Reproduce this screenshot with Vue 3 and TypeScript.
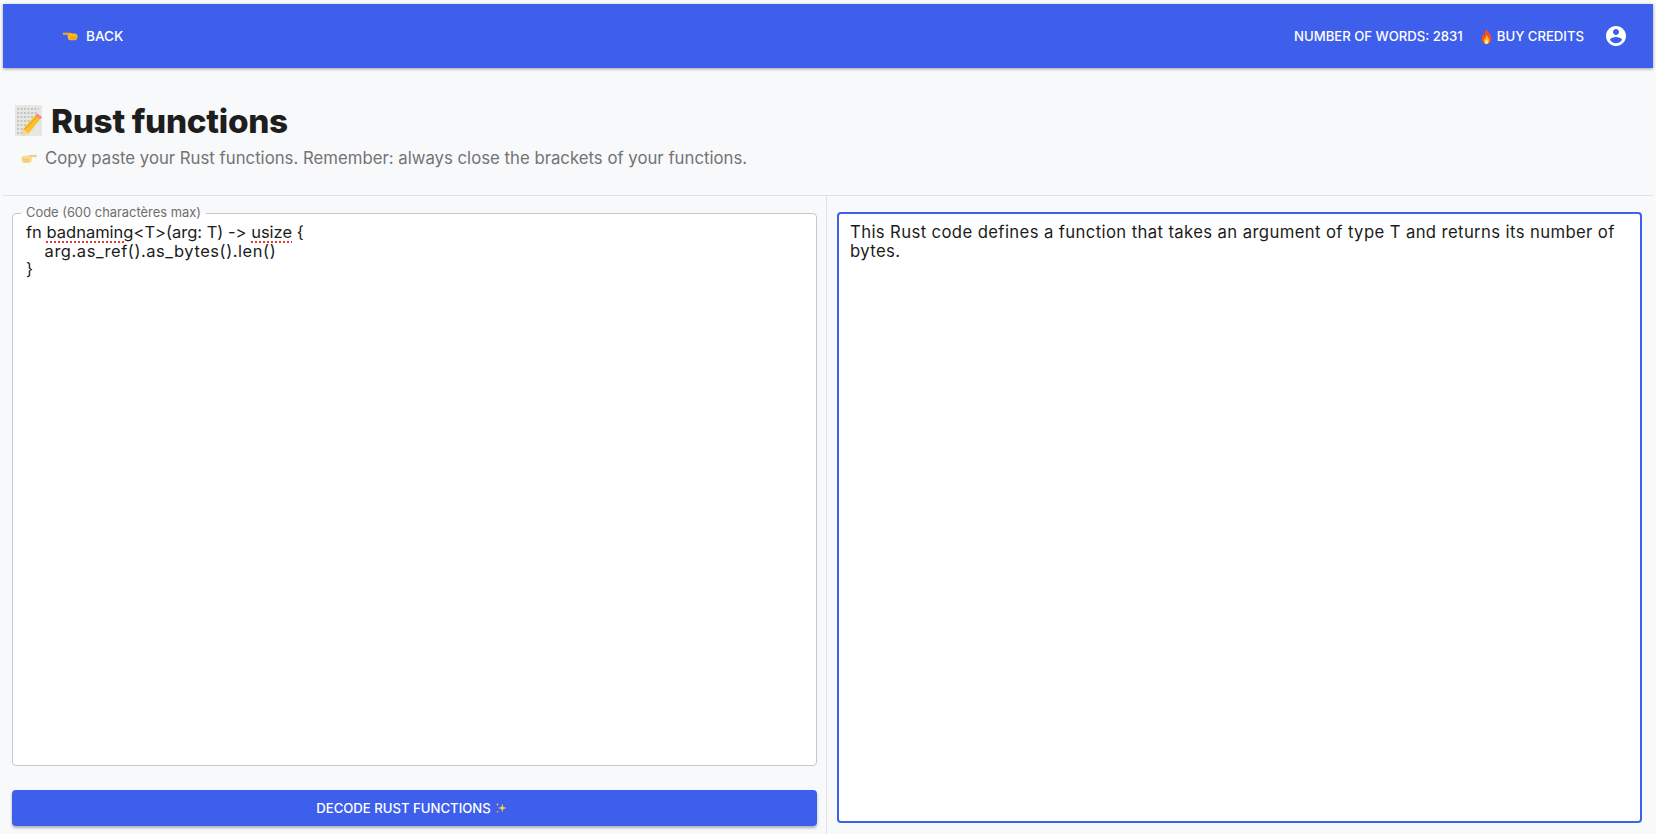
<script setup lang="ts">
const title = 'Rust functions'
const subtitle = 'Copy paste your Rust functions. Remember: always close the brackets of your functions.'
</script>

<template>
  <div class="page">
    <header class="bar">
      <button class="nav back">
        <svg class="emo hand-left" viewBox="0 0 20 12"><path d="M0 1.500h9.500c1 0 2 .3 2.800 1h3.700c2 0 3.400 1.300 3.400 4 0 3-1.600 5-3.900 5h-5.500c-1.900 0-3.100-1.100-3.500-3l-.2-4.200H0z" fill="#fdb721"/><path d="M1 2.500h8M10 7.500h8M10 9.500h7" stroke="#d98a0f" stroke-width=".8" fill="none"/></svg>
        BACK
      </button>
      <div class="right">
        <span class="nav">NUMBER OF WORDS: 2831</span>
        <button class="nav buy">
          <svg class="emo fire" viewBox="0 0 14 16" preserveAspectRatio="none"><path d="M7 0c.6 2.800 5.600 5 6.200 9.200C13.700 13 10.700 16 7 16s-6.500-2.700-6.200-6.300C1 7.600 2 6.300 3 5.400c.1 1.200.6 2 1.300 2.300C3.900 4.800 5.200 1.800 7 0z" fill="#f4511e"/><path d="M7 6.500c.5 1.700 3.600 3 3.600 5.700 0 2.200-1.600 3.800-3.600 3.800s-3.600-1.600-3.500-3.700c.1-1.300.7-2 1.400-2.600.3.700.6 1 1 1.100C5.700 9.300 6 7.800 7 6.500z" fill="#ffb52e"/><path d="M7 11c.3.900 1.800 1.500 1.800 3 0 1.100-.8 2-1.800 2s-1.800-.9-1.800-2c0-1.500 1.500-2 1.800-3z" fill="#ffeaa8"/></svg>
          BUY CREDITS
        </button>
        <svg class="account" viewBox="0 0 24 24"><path d="M12 2C6.480 2 2 6.480 2 12s4.480 10 10 10 10-4.480 10-10S17.520 2 12 2zm0 3c1.660 0 3 1.340 3 3s-1.340 3-3 3-3-1.340-3-3 1.340-3 3-3zm0 14.200c-2.500 0-4.710-1.280-6-3.220.03-1.990 4-3.080 6-3.080 1.990 0 5.970 1.090 6 3.080-1.290 1.940-3.500 3.220-6 3.220z" fill="#fff"/></svg>
      </div>
    </header>

    <section class="intro">
      <h1 class="title">
        <svg class="memo" viewBox="0 0 28 32">
          <rect width="27" height="31" y="0" fill="#e6e6e3"/>
          <g stroke="#77777a" stroke-width=".6" stroke-dasharray="2 1.500">
            <path d="M2 4h22M2 8h20M2 12h17M2 16h13M2 20h9M2 24h7M2 28h7"/>
          </g>
          <path d="M22 8.500l5 3.500L13.500 28.500 7 31l1-7z" fill="#fbc02d"/>
          <path d="M22 8.500l5 3.500-1.800 2.300-5-3.500z" fill="#f48a9b"/>
          <path d="M8 24l5.500 4.500L7 31z" fill="#f4d6a8"/>
          <path d="M9.500 24.500L23 10.800" stroke="#e59a12" stroke-width="1"/>
        </svg>
        <span>{{ title }}</span>
      </h1>
      <p class="sub">
        <svg class="emo hand-right" viewBox="0 0 20 12"><path d="M20 1.500h-9.500c-1 0-2 .3-2.800 1H4c-2 0-3.400 1.300-3.400 4 0 3 1.600 5 3.900 5H10c1.900 0 3.100-1.100 3.500-3l.2-4.200H20z" fill="#fbd98c"/><path d="M19 2.500h-8M10 7.500H2M10 9.500H3" stroke="#e5b765" stroke-width=".8" fill="none"/></svg>
        <span>{{ subtitle }}</span>
      </p>
    </section>

    <main class="columns">
      <div class="col left">
        <fieldset class="code">
          <legend>Code (600 charactères max)</legend>
          <pre class="source">fn <span class="typo">badnaming</span>&lt;T&gt;(arg: T) -&gt; <span class="typo">usize</span> {
    <span class="wide">arg.as_ref().as_bytes().len()</span>
}</pre>
        </fieldset>
        <button class="decode">
          DECODE RUST FUNCTIONS
          <svg class="emo spark" viewBox="0 0 14 14"><path d="M8.500 2l1.100 3.900L13.500 7 9.600 8.100 8.500 12 7.400 8.100 3.500 7l3.900-1.100z" fill="#fdd835"/><path d="M3 1l.5 1.500L5 3l-1.500.5L3 5l-.5-1.500L1 3l1.500-.5zM3 10l.4 1.100 1.100.4-1.100.4L3 13l-.4-1.100-1.100-.4 1.100-.4z" fill="#fbc02d"/></svg>
        </button>
      </div>
      <div class="col right-col">
        <div class="answer">This Rust code defines a function that takes an argument of type T and returns its number of bytes.</div>
      </div>
    </main>
  </div>
</template>

<style>
html, body { margin: 0; background: #f8f9fb; }
</style>

<style scoped>
.page {
  width: 1656px;
  height: 834px;
  box-sizing: border-box;
  padding: 4px 3px 0;
  overflow: hidden;
  display: flex;
  flex-direction: column;
  background: #f8f9fb;
  font-family: Inter, "Open Sans", sans-serif;
  font-feature-settings: "calt" 0;
  color: #1e1e1e;
}
.bar {
  height: 64px;
  flex: none;
  background: #3e5fec;
  box-shadow: 0 1px 3px rgba(0, 0, 0, .35);
  display: flex;
  align-items: center;
  justify-content: space-between;
  padding: 0 25px 0 60px;
  color: #fff;
}
.nav {
  display: inline-flex;
  align-items: center;
  gap: 6px;
  font: 500 13.150px Inter, sans-serif;
  color: #fff;
  background: none;
  border: 0;
  padding: 0;
  white-space: nowrap;
}
.back { font-size: 13.600px; gap: 8px; }
.right {
  display: flex;
  align-items: center;
}
.buy { margin-left: 18px; gap: 5px; }
.account { width: 24px; height: 24px; margin-left: 20px; }
.emo { flex: none; display: block; }
.hand-left { width: 15px; height: 10px; }
.fire { width: 11px; height: 15px; }
.intro {
  height: 128px;
  box-sizing: border-box;
  flex: none;
  padding: 34px 0 0 12px;
  border-bottom: 1px solid #dfe1e4;
}
.title {
  margin: 0;
  display: flex;
  align-items: center;
  gap: 8px;
  font: 800 33.300px/38px Inter, sans-serif;
  letter-spacing: -.3px;
  color: #1e1e1e;
}
.memo { width: 28px; height: 32px; flex: none; }
.sub {
  margin: 6px 0 0 6px;
  display: flex;
  align-items: center;
  gap: 8px;
  font: 400 16.750px/24px Inter, sans-serif;
  color: #737373;
}
.hand-right { width: 16px; height: 11px; }
.columns {
  flex: 1;
  min-height: 0;
  display: grid;
  grid-template-columns: 824px 1fr;
}
.col { min-width: 0; box-sizing: border-box; }
.left {
  padding: 9px 9px 7px;
  display: flex;
  flex-direction: column;
  border-right: 1px solid #dfe1e4;
  width: 824px;
}
.code {
  margin: 0;
  padding: 0 13px 0;
  height: 561px;
  flex: none;
  box-sizing: border-box;
  background: #fff;
  border: 1px solid #c4c7cc;
  border-radius: 4px;
  min-width: 0;
}
legend {
  padding: 0 5px;
  margin-left: -5px;
  font: 400 12.900px/16px Inter, sans-serif;
  color: #6e6e6e;
}
.source {
  margin: 2px 0 0;
  font: 400 16.500px/18.500px Inter, sans-serif;
  font-feature-settings: "calt" 0;
  color: #1b1b1b;
  tab-size: 4;
}
.wide { letter-spacing: .55px; }
.typo {
  text-decoration: underline dotted #e53935 1.500px;
  text-underline-offset: 3px;
}
.decode {
  margin-top: auto;
  margin-bottom: 1px;
  height: 36px;
  flex: none;
  width: 100%;
  padding: 0 6px 0 0;
  background: #3e5fec;
  border: 0;
  border-radius: 4px;
  box-shadow: 0 2px 3px rgba(0, 0, 0, .3);
  color: #fff;
  font: 500 13.150px Inter, sans-serif;
  display: flex;
  align-items: center;
  justify-content: center;
  gap: 4px;
}
.spark { width: 12px; height: 12px; }
.right-col { padding: 16px 11px 11px 10px; }
.answer {
  height: 100%;
  box-sizing: border-box;
  background: #fff;
  border: 2px solid #3e5fec;
  border-radius: 4px;
  padding: 9px 11px;
  font: 400 16.700px/18.500px Inter, sans-serif;
  letter-spacing: .38px;
  color: #1b1b1b;
}
</style>
